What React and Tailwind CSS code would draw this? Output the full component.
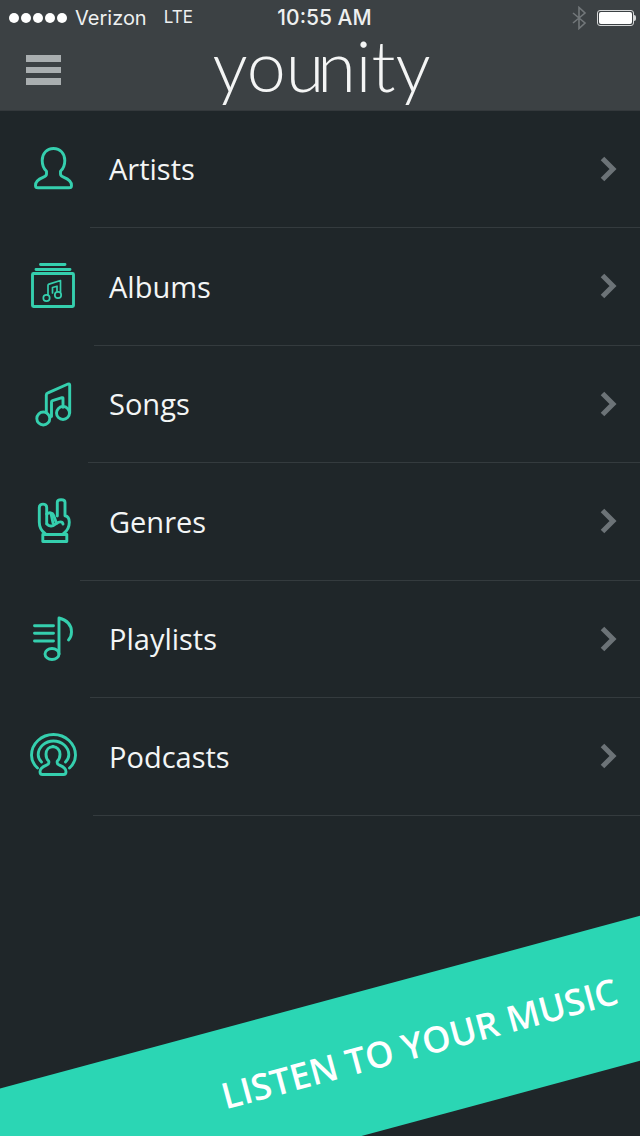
import React from 'react';

const iconProps = {
  viewBox: '0 0 70 70',
  fill: 'none',
  stroke: '#35cfae',
  strokeWidth: 2.900,
  strokeLinecap: 'round',
  strokeLinejoin: 'round',
  className: 'w-[70px] h-[70px]',
};

const ArtistIcon = () => (
  <svg {...iconProps}>
    <path d="M33.500 14.500c-6.800 0-11.300 5-11.300 12 0 4.600 1.800 8.500 4.300 10.800v2.700c0 1.600-1.300 2.500-3.500 3.400-4.500 1.800-7.500 3.700-7.500 8 0 1.500.8 2.400 2.500 2.400h31c1.700 0 2.500-.9 2.500-2.400 0-4.300-3-6.200-7.500-8-2.200-.9-3.500-1.800-3.500-3.400v-2.700c2.500-2.300 4.300-6.200 4.300-10.800 0-7-4.500-12-11.300-12z" />
  </svg>
);

const AlbumIcon = () => (
  <svg {...iconProps}>
    <rect x="12.500" y="22.500" width="41" height="33" rx="1" />
    <path d="M20.500 13.500h24.500M16 18.500h34" />
    <g strokeWidth="1.700">
      <circle cx="26.500" cy="47" r="3.200" />
      <circle cx="38" cy="44" r="3.200" />
      <path d="M28 44V34.500q0-1 1-1.400l11.500-3.600V41M32.500 42V36.500l4.500-1.300v5" />
    </g>
  </svg>
);

const SongIcon = () => (
  <svg {...iconProps}>
    <circle cx="23.300" cy="49.500" r="6.500" />
    <circle cx="43" cy="44" r="6.500" />
    <path d="M26.300 43.700V26q0-1.700 1.700-2.200l20-8.800q1.700-.6 1.700 1V44M31.500 47.500V33q0-1 1-1.300l9.500-3q1-.3 1 .8v8.800" />
  </svg>
);

const GenreIcon = () => (
  <svg {...iconProps}>
    <path d="M22.800 48.500h24v7h-24z" />
    <path d="M25 47.500c-3.500-2.500-5.700-6.500-5.700-11.200V21.500c0-4.500 7.400-4.500 7.400 0V38" />
    <path d="M26.700 28c2.500-2 6-1.500 6.800 1l2.500 7" />
    <path d="M31 27.500l2 9.500M27 38c2 3 6 2.500 9.500-.5 2.500-2 6-2.500 6.500.5" />
    <path d="M37.300 30V16.300c0-3.400 7.700-3.400 7.700 0V29.700c2.800.5 4.300 2.800 4.300 6.600 0 4.700-2.200 8.700-5.700 11.200" />
  </svg>
);

const PlaylistIcon = () => (
  <svg {...iconProps}>
    <path d="M14.500 21.700h19M14.500 29.300h19M14.500 37h19" />
    <ellipse cx="32" cy="50" rx="7" ry="5.500" />
    <path d="M39 50V14c7.500 2 12.500 6.500 12.500 14 0 3-1.200 6-3 8" />
  </svg>
);

const PodcastIcon = () => (
  <svg {...iconProps}>
    <path d="M17.500 47c-3.800-3.500-6-8-6-12.800C11.500 22.500 21.500 13.500 33.500 13.500s22 9 22 20.700c0 4.800-2.200 9.300-6 12.800" />
    <path d="M21.500 41c-2-2-3.300-4.500-3.300-7.300 0-7.500 7-13.700 15.300-13.700s15.300 6.200 15.300 13.700c0 2.800-1.300 5.300-3.300 7.300" />
    <path d="M33.500 25.500c-4.500 0-7.500 3.200-7.500 7.800 0 3 1.200 5.500 2.800 7v1.700c0 1-.8 1.600-2.300 2.200-3.500 1.400-6.500 2.800-6.500 6.500 0 1.500 1 2.800 2.500 2.800h21c1.500 0 2.500-1.300 2.500-2.800 0-3.700-3-5.100-6.500-6.500-1.500-.6-2.300-1.200-2.300-2.200v-1.700c1.600-1.500 2.800-4 2.800-7 0-4.600-3-7.800-7.500-7.800z" />
  </svg>
);

const items = [
  { label: 'Artists', Icon: ArtistIcon, line: 'ml-[90px]' },
  { label: 'Albums', Icon: AlbumIcon, line: 'ml-[94px]' },
  { label: 'Songs', Icon: SongIcon, line: 'ml-[88px]' },
  { label: 'Genres', Icon: GenreIcon, line: 'ml-[80px]' },
  { label: 'Playlists', Icon: PlaylistIcon, line: 'ml-[90px]' },
  { label: 'Podcasts', Icon: PodcastIcon, line: 'ml-[93px]' },
];

function StatusBar() {
  return (
    <div className="grid grid-cols-3 items-center h-[36px] pl-[9px] pr-[4px] text-[#eef0f0] font-['Inter',sans-serif]">
      <div className="flex items-center">
        <div className="flex gap-[2px]">
          {[0, 1, 2, 3, 4].map((i) => (
            <span key={i} className="w-[10px] h-[10px] rounded-full bg-white" />
          ))}
        </div>
        <span className="ml-[8px] text-[20px] whitespace-nowrap">Verizon</span>
        <span className="ml-[17px] text-[17px]">LTE</span>
      </div>
      <div className="text-center font-medium text-[21px] whitespace-nowrap pl-[4px]">10:55 AM</div>
      <div className="flex items-center justify-end">
        <svg width="16" height="24" viewBox="0 0 16 24" fill="none" stroke="#72777a" strokeWidth="1.600" className="mr-[10px]">
          <path d="M2 7l12 10-6 5.500V1.500L14 7 2 17" />
        </svg>
        <div className="w-[37px] h-[16px] rounded-[3px] border border-[#d5d7d8] p-[1px]">
          <div className="w-full h-full rounded-[2px] bg-white" />
        </div>
        <div className="w-[2px] h-[6px] rounded-r-sm bg-[#d5d7d8]" />
      </div>
    </div>
  );
}

function Header() {
  return (
    <header className="h-[110.500px] bg-[#3c4144] border-b border-[#34393c]">
      <StatusBar />
      <div className="relative h-[73px]">
        <div className="absolute left-[26px] top-[19px] flex flex-col gap-[5px]">
          <span className="block w-[35px] h-[7px] bg-[#a9aeb0]" />
          <span className="block w-[35px] h-[6px] bg-[#a9aeb0]" />
          <span className="block w-[35px] h-[7px] bg-[#a9aeb0]" />
        </div>
        <div className="text-center text-[70px] leading-[58px] font-light text-[#f4f5f5] font-['Lato',sans-serif] pl-[3px] whitespace-nowrap">
          you<span className="-ml-[7px]">nity</span>
        </div>
      </div>
    </header>
  );
}

export default function App() {
  return (
    <div className="relative w-[640px] h-[1136px] overflow-hidden bg-[#1f2629] font-['Open_Sans',sans-serif]">
      <Header />
      <nav>
        {items.map(({ label, Icon, line }) => (
          <div key={label} className="h-[117.500px] flex flex-col">
            <div className="flex-1 flex items-center pl-[20px]">
              <div className="w-[89px]">
                <Icon />
              </div>
              <span className="flex-1 text-[29px] text-[#f3f5f5]">{label}</span>
              <svg width="20" height="28" viewBox="0 0 20 28" fill="none" stroke="#6c7377" strokeWidth="5" className="mr-[21px]">
                <path d="M3.500 3.500L14 14 3.500 24.500" />
              </svg>
            </div>
            <div className={`h-px bg-[#343b3e] ${line}`} />
          </div>
        ))}
      </nav>
      <div className="absolute left-[-60px] top-[1002px] w-[780px] h-[140px] -rotate-[15.100deg] bg-[#2bd6b4] flex items-center justify-end pr-[92px] pb-[8px]">
        <span className="text-[36px] font-semibold text-white whitespace-nowrap">LISTEN TO YOUR MUSIC</span>
      </div>
    </div>
  );
}
